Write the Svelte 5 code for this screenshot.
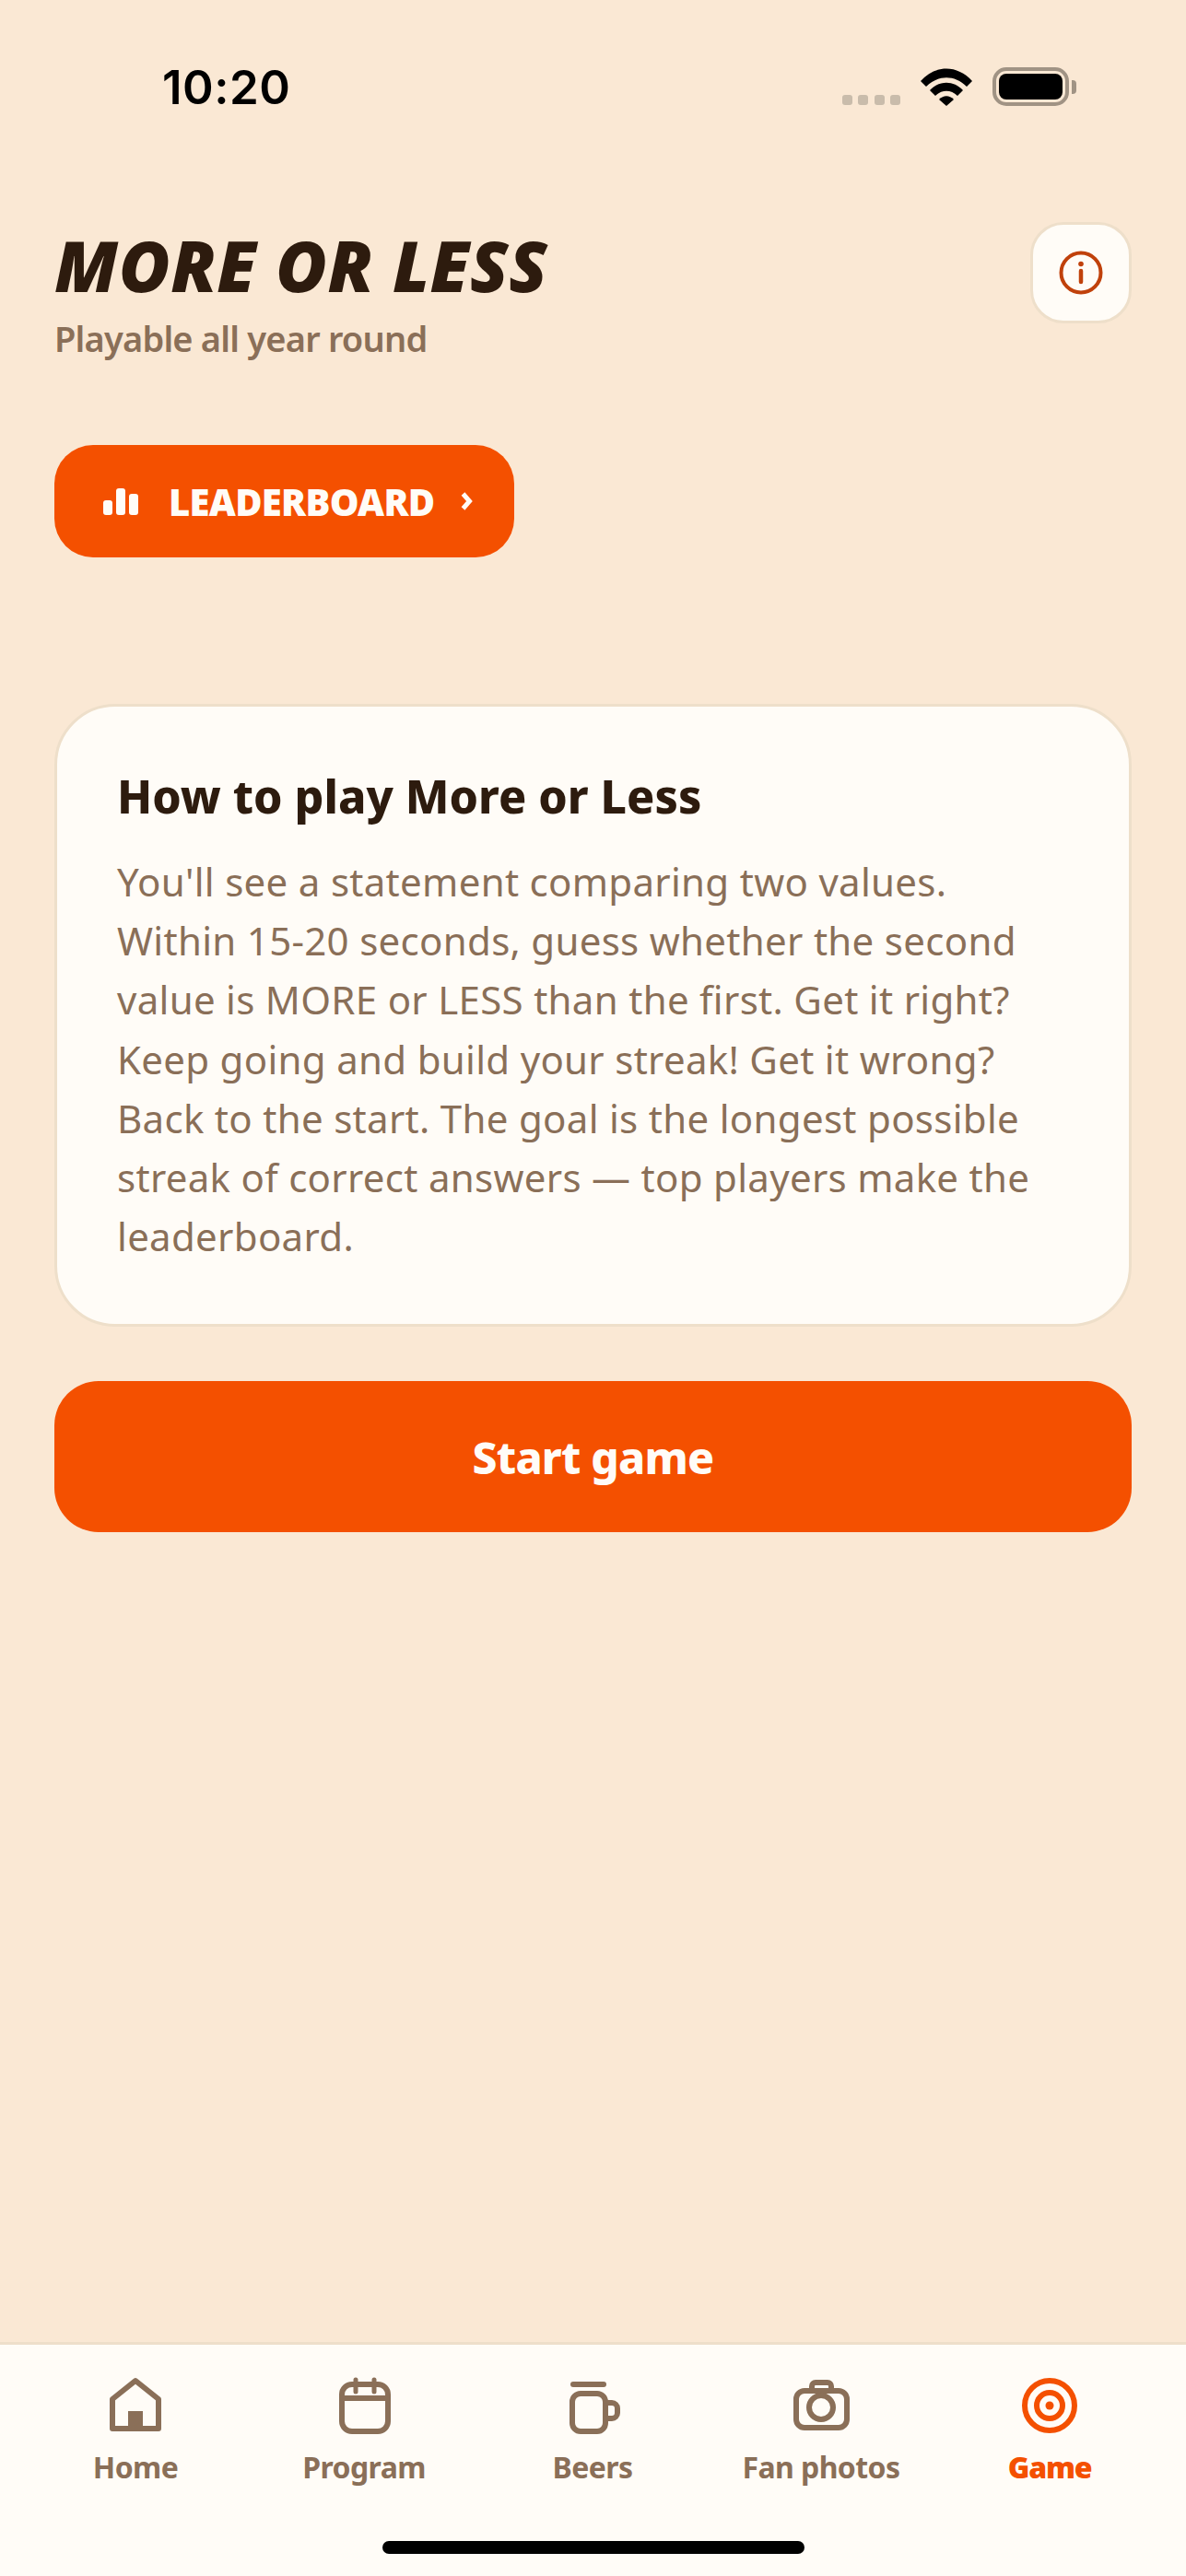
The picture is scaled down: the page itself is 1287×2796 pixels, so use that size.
<script>
  const navItems = [
    { label: 'Home', icon: 'home' },
    { label: 'Program', icon: 'calendar' },
    { label: 'Beers', icon: 'mug' },
    { label: 'Fan photos', icon: 'camera' },
    { label: 'Game', icon: 'target', active: true }
  ];
</script>

<div class="page">
  <!-- status bar -->
  <div class="status">
    <span class="time">10:20</span>
    <div class="status-right">
      <div class="dots"><i></i><i></i><i></i><i></i></div>
      <svg class="wifi" width="56" height="41" viewBox="0 0 56 41">
        <path d="M0 14 C16 -4 40 -4 56 14 L50 20 C37 7 19 7 6 20 Z" />
        <path d="M10 24 C20 13 36 13 46 24 L40 30 C33 23 23 23 16 30 Z" />
        <path d="M20 34 C25 29 31 29 36 34 L28 41 Z" />
      </svg>
      <div class="battery"><div class="battery-fill"></div></div>
      <div class="battery-cap"></div>
    </div>
  </div>

  <div class="content">
    <div class="header">
      <div>
        <h1>MORE OR LESS</h1>
        <p class="subtitle">Playable all year round</p>
      </div>
      <button class="info-btn" aria-label="Info">
        <svg width="48" height="48" viewBox="0 0 48 48" fill="none">
          <circle cx="24" cy="24" r="21.5" stroke="#c0410b" stroke-width="4" />
          <circle cx="24" cy="14.5" r="2.8" fill="#c0410b" />
          <line x1="24" y1="22" x2="24" y2="34" stroke="#c0410b" stroke-width="4.5" stroke-linecap="round" />
        </svg>
      </button>
    </div>

    <button class="leaderboard">
      <svg width="38" height="29" viewBox="0 0 38 29" fill="#fffcf7">
        <rect x="0" y="13" width="10" height="16" rx="3" />
        <rect x="14" y="0" width="10" height="29" rx="3" />
        <rect x="28" y="6" width="10" height="23" rx="3" />
      </svg>
      <span>LEADERBOARD</span>
      <svg class="chev" width="13" height="20" viewBox="0 0 13 20" fill="none">
        <path d="M2.5 2 L9.5 10 L2.5 18" stroke="#fffcf7" stroke-width="5" />
      </svg>
    </button>

    <div class="card">
      <h2>How to play More or Less</h2>
      <p>
        You'll see a statement comparing two values.<br />
        Within 15-20 seconds, guess whether the second<br />
        value is MORE or LESS than the first. Get it right?<br />
        Keep going and build your streak! Get it wrong?<br />
        Back to the start. The goal is the longest possible<br />
        streak of correct answers — top players make the<br />
        leaderboard.
      </p>
    </div>

    <button class="start">Start game</button>
  </div>

  <nav class="tabbar">
    <div class="tabs">
      {#each navItems as item}
        <div class="tab" class:active={item.active}>
          <svg width="72" height="72" viewBox="0 0 72 72" fill="none" stroke="currentColor" stroke-width="6" stroke-linejoin="round" stroke-linecap="round">
            {#if item.icon === 'home'}
              <path d="M11 61 V29 L36 9 L61 29 V61 Z" />
              <rect x="28" y="42" width="16" height="20" fill="currentColor" stroke="none" />
            {:else if item.icon === 'calendar'}
              <rect x="12" y="13" width="50" height="51" rx="11" />
              <line x1="12" y1="28" x2="62" y2="28" />
              <line x1="27" y1="8" x2="27" y2="21" stroke-width="5" />
              <line x1="47" y1="8" x2="47" y2="21" stroke-width="5" />
            {:else if item.icon === 'mug'}
              <line x1="15" y1="13" x2="48" y2="13" />
              <rect x="14" y="23" width="36" height="41" rx="9" />
              <path d="M52 33 h5 a6 6 0 0 1 6 6 v5 a6 6 0 0 1 -6 6 h-5" />
            {:else if item.icon === 'camera'}
              <rect x="9" y="20" width="55" height="40" rx="9" />
              <path d="M26 20 v-5 a4 4 0 0 1 4 -4 h13 a4 4 0 0 1 4 4 v5" />
              <circle cx="36" cy="38" r="13" />
            {:else}
              <circle cx="36" cy="36" r="27" />
              <circle cx="36" cy="36" r="14" />
              <circle cx="36" cy="36" r="4.5" fill="currentColor" stroke="none" />
            {/if}
          </svg>
          <span>{item.label}</span>
        </div>
      {/each}
    </div>
    <div class="home-indicator"></div>
  </nav>
</div>

<style>
  :global(body) {
    margin: 0;
    background: #fae8d4;
  }

  .page {
    width: 1287px;
    height: 2796px;
    display: flex;
    flex-direction: column;
    font-family: "Noto Sans", Roboto, sans-serif;
    color: #2d1b0e;
    box-sizing: border-box;
  }

  /* Status bar */
  .status {
    height: 190px;
    padding: 66px 0 0 176px;
    box-sizing: border-box;
    display: flex;
    justify-content: space-between;
    align-items: flex-start;
  }

  .time {
    font-family: Inter, sans-serif;
    font-size: 51px;
    font-weight: 600;
    line-height: 58px;
    letter-spacing: 0.5px;
    color: #000;
  }

  .status-right {
    display: flex;
    align-items: flex-end;
    margin: 7px 119px 0 0;
    height: 42px;
  }

  .dots { display: flex; gap: 6.5px; margin: 0 22px 1px 0; }
  .dots i { width: 11px; height: 11px; border-radius: 3px; background: #c9bcab; }

  .wifi { fill: #000; margin-right: 22px; }

  .battery {
    width: 83px;
    height: 42px;
    box-sizing: border-box;
    border: 4px solid #a09384;
    border-radius: 15px;
    padding: 3px;
  }

  .battery-fill { width: 100%; height: 100%; background: #000; border-radius: 8px; }

  .battery-cap {
    width: 5px;
    height: 15px;
    margin: 0 0 13px 3px;
    background: #a09384;
    border-radius: 0 4px 4px 0;
  }

  /* Header */
  .content { padding: 0 59px; display: flex; flex-direction: column; align-items: flex-start; }

  .header {
    width: 100%;
    display: flex;
    justify-content: space-between;
    align-items: flex-start;
    margin-top: 51px;
  }

  h1 {
    margin: 3px 0 0;
    font-size: 76px;
    line-height: 88px;
    font-weight: 900;
    font-style: italic;
    letter-spacing: 0.6px;
    color: #2d1b0e;
  }

  .subtitle {
    margin: 11px 0 0;
    font-size: 38px;
    line-height: 48px;
    font-weight: 600;
    letter-spacing: -0.8px;
    color: #8a6f58;
  }

  .info-btn {
    width: 110px;
    height: 110px;
    box-sizing: border-box;
    background: #fffcf7;
    border: 3px solid #eedfca;
    border-radius: 36px;
    padding: 0;
    display: flex;
    align-items: center;
    justify-content: center;
  }

  .leaderboard {
    margin-top: 92px;
    width: 499px;
    height: 122px;
    box-sizing: border-box;
    padding: 0 0 0 53px;
    background: #f45000;
    border: none;
    border-radius: 42px;
    display: flex;
    align-items: center;
    color: #fffcf7;
    font-family: inherit;
    font-size: 40px;
    font-weight: 900;
    letter-spacing: -0.7px;
  }

  .leaderboard span { margin-left: 33px; }
  .chev { margin-left: 28px; }

  /* Card */
  .card {
    margin-top: 159px;
    width: 100%;
    box-sizing: border-box;
    height: 676px;
    padding: 67px 65px 0;
    background: #fffcf7;
    border: 3px solid #eedfca;
    border-radius: 66px;
  }

  h2 {
    margin: 0;
    font-size: 50px;
    line-height: 60px;
    font-weight: 800;
    color: #2d1b0e;
  }

  .card p {
    margin: 31px 0 0;
    font-size: 42px;
    line-height: 64.2px;
    font-weight: 400;
    letter-spacing: 0.3px;
    color: #8a6f58;
  }

  .start {
    margin-top: 59px;
    width: 100%;
    height: 164px;
    background: #f45000;
    border: none;
    border-radius: 48px;
    color: #fffcf7;
    font-family: inherit;
    font-size: 48px;
    font-weight: 800;
    letter-spacing: -0.8px;
  }

  /* Tab bar */
  .tabbar {
    margin-top: auto;
    height: 254px;
    box-sizing: border-box;
    background: #fffcf7;
    border-top: 3px solid #eedfca;
    padding-top: 30px;
    position: relative;
  }

  .tabs { display: grid; grid-template-columns: repeat(5, 248px); padding-left: 23px; }

  .tab {
    display: flex;
    flex-direction: column;
    align-items: center;
    color: #8a6f58;
    font-size: 32px;
    font-weight: 700;
    line-height: 40px;
    letter-spacing: -0.6px;
  }

  .tab span { margin-top: 11px; }
  .tab.active { color: #f45000; font-weight: 900; letter-spacing: -1.2px; }

  .home-indicator {
    position: absolute;
    left: 415px;
    top: 213px;
    width: 458px;
    height: 14px;
    border-radius: 7px;
    background: #000;
  }
</style>
